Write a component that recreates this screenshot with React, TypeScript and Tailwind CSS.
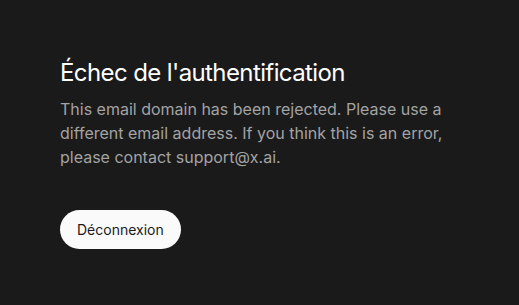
import React from "react";

const App = () => {
  return (
    <div className="min-h-screen w-full bg-[#1a1a1a] font-['Inter',sans-serif]">
      <div className="flex flex-col items-start px-[60px] pt-[57px]">
        <h1 className="text-2xl leading-8 tracking-tight text-white font-normal">
          Échec de l'authentification
        </h1>
        <p className="mt-2 max-w-[400px] text-base leading-6 text-[#a3a3a3]">
          This email domain has been rejected. Please use a different email
          address. If you think this is an error, please contact support@x.ai.
        </p>
        <button className="mt-[41px] rounded-full bg-[#fafafa] px-[17px] h-[39px] text-sm text-[#1a1a1a]">
          Déconnexion
        </button>
      </div>
    </div>
  );
};

export default App;
